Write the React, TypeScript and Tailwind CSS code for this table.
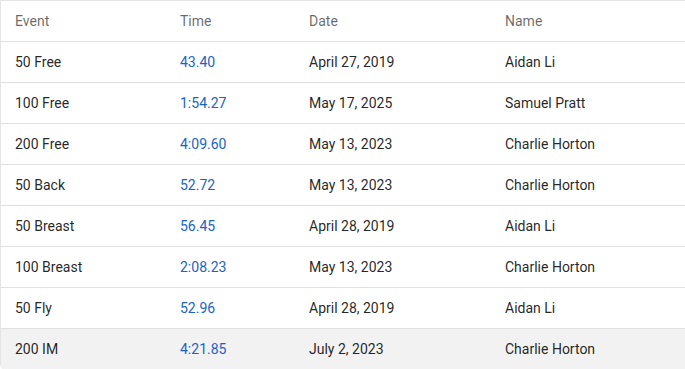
const rows = [
  { event: "50 Free", time: "43.40", date: "April 27, 2019", name: "Aidan Li" },
  { event: "100 Free", time: "1:54.27", date: "May 17, 2025", name: "Samuel Pratt" },
  { event: "200 Free", time: "4:09.60", date: "May 13, 2023", name: "Charlie Horton" },
  { event: "50 Back", time: "52.72", date: "May 13, 2023", name: "Charlie Horton" },
  { event: "50 Breast", time: "56.45", date: "April 28, 2019", name: "Aidan Li" },
  { event: "100 Breast", time: "2:08.23", date: "May 13, 2023", name: "Charlie Horton" },
  { event: "50 Fly", time: "52.96", date: "April 28, 2019", name: "Aidan Li" },
  { event: "200 IM", time: "4:21.85", date: "July 2, 2023", name: "Charlie Horton" },
];

export default function App() {
  return (
    <div className="w-[685px] h-[369px] overflow-hidden bg-white font-['Roboto',sans-serif] text-[14px]">
      <div className="border-t border-l border-[#e4e4e4] rounded-bl-md overflow-hidden">
        {/* header */}
        <div className="grid grid-cols-[165px_129px_196px_1fr] h-[41px] items-center pl-[14px] text-[rgba(0,0,0,0.6)] border-b border-[#e0e0e0]">
          <div>Event</div>
          <div>Time</div>
          <div>Date</div>
          <div>Name</div>
        </div>
        {rows.map((r, i) => (
          <div
            key={i}
            className={`grid grid-cols-[165px_129px_196px_1fr] h-[41px] items-center pl-[14px] text-[rgba(0,0,0,0.87)] ${
              i === rows.length - 1 ? "bg-[#f2f2f2]" : "border-b border-[#e0e0e0]"
            }`}
          >
            <div>{r.event}</div>
            <div className="text-[#1a63c6]">{r.time}</div>
            <div>{r.date}</div>
            <div>{r.name}</div>
          </div>
        ))}
      </div>
    </div>
  );
}
